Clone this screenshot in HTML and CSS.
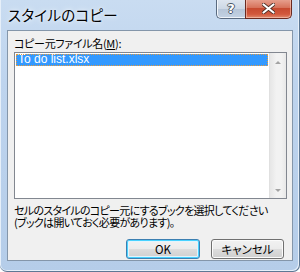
FILE: index.html
```html
<!DOCTYPE html>
<html lang="ja">
<head>
    <meta charset="UTF-8">
    <title>スタイルのコピー</title>
    <link rel="stylesheet" href="styles.css">
</head>
<body>
    <div class="window">
        <!-- Title bar -->
        <div class="titlebar">
            <span class="title">スタイルのコピー</span>
            <div class="caption-buttons">
                <div class="cap-btn help">?</div>
                <div class="cap-btn close">
                    <svg width="13" height="11" viewBox="0 0 13 11">
                        <path d="M1.5 1.5 L11.5 9.5 M11.5 1.5 L1.5 9.5" stroke="#4a2a22" stroke-width="3.6" stroke-linecap="round"/>
                        <path d="M1.5 1.5 L11.5 9.5 M11.5 1.5 L1.5 9.5" stroke="#ffffff" stroke-width="2.2" stroke-linecap="round"/>
                    </svg>
                </div>
            </div>
        </div>

        <!-- Client area -->
        <div class="client">
            <div class="label">コピー元ファイル名(<u>M</u>):</div>
            <div class="listbox">
                <div class="items">
                    <div class="item selected">To do list.xlsx</div>
                </div>
                <div class="scrollbar">
                    <div class="arrow up"></div>
                    <div class="track"></div>
                    <div class="arrow down"></div>
                </div>
            </div>
            <div class="note">
                <div class="note-line">セルのスタイルのコピー元にするブックを選択してください</div>
                <div class="note-line">(ブックは開いておく必要があります)。</div>
            </div>
            <div class="buttons">
                <div class="btn default">OK</div>
                <div class="btn">キャンセル</div>
            </div>
        </div>
    </div>
</body>
</html>
```

FILE: styles.css
```css
/* General */
html, body {
    margin: 0;
    padding: 0;
}

body {
    width: 300px;
    height: 272px;
    overflow: hidden;
    background: #ffffff;
    font-family: "Noto Sans CJK JP", "Liberation Sans", sans-serif;
    font-size: 12px;
    color: #000;
}

/* Window frame */
.window {
    box-sizing: border-box;
    width: 300px;
    height: 272px;
    display: flex;
    flex-direction: column;
    background: linear-gradient(to bottom, #c9dcf1 0%, #bed4ee 30%, #b5cde9 100%);
    border: 1px solid #5d7894;
    border-top: none;
    border-left: none;
    border-radius: 0 0 7px 7px;
    box-shadow: inset 1px 0 0 #e6eff9, inset -1px -1px 0 #e6eff9;
}

.titlebar {
    height: 30px;
    display: flex;
    justify-content: space-between;
    align-items: flex-start;
}

.title {
    font-size: 14.5px;
    line-height: 15px;
    margin: 7px 0 0 8px;
    font-feature-settings: "palt";
    letter-spacing: 0.3px;
    text-shadow: 0 0 6px #eef5fc, 0 0 3px #eef5fc;
}

.caption-buttons {
    display: flex;
    margin-right: 7px;
    margin-top: -1px;
}

.cap-btn {
    box-sizing: border-box;
    height: 20px;
    display: flex;
    align-items: center;
    justify-content: center;
    border: 1px solid #5a6b80;
    border-top: none;
}

.help {
    width: 29px;
    border-right: none;
    border-radius: 0 0 0 5px;
    background: linear-gradient(to bottom, #dfe7f0 0%, #cdd8e5 50%, #b6c5d7 51%, #c3d2e3 100%);
    box-shadow: inset 1px 0 0 #f3f7fb, inset 0 -1px 0 #eef3f9;
    font-family: "DejaVu Sans", sans-serif;
    font-weight: bold;
    font-size: 13px;
    line-height: 13px;
    color: #ffffff;
    text-shadow: 1px 0 0 #4b5866, -1px 0 0 #4b5866, 0 1px 0 #4b5866, 0 -1px 0 #4b5866;
}

.close {
    width: 47px;
    border-color: #6b2a20;
    border-radius: 0 0 5px 0;
    background: linear-gradient(to bottom, #e8a493 0%, #d7735c 45%, #c74a30 50%, #d2583c 80%, #e08a6e 100%);
    box-shadow: inset 0 0 0 1px rgba(255, 220, 205, 0.5);
}

/* Client area */
.client {
    flex: 1;
    margin: 0 6px 10px 7px;
    background: #f0f0f0;
    border: 1px solid #8496aa;
    padding: 5px 6px 0 6px;
    display: flex;
    flex-direction: column;
}

.label {
    font-size: 11px;
    line-height: 14px;
    height: 15px;
    font-feature-settings: "palt";
    letter-spacing: -0.3px;
}

.label u {
    text-decoration-thickness: 1px;
    text-underline-offset: 1px;
}

/* List box */
.listbox {
    box-sizing: border-box;
    width: 273px;
    height: 147px;
    margin-top: 1px;
    border: 1px solid #828790;
    background: #ffffff;
    display: flex;
}

.items {
    flex: 1;
    padding: 1px;
}

.item {
    font-family: "Liberation Sans", sans-serif;
    font-size: 12px;
    line-height: 11px;
    height: 12px;
    padding-left: 2px;
}

.item.selected {
    box-sizing: border-box;
    width: 252px;
    background: #3399ff;
    color: #ffffff;
    outline: 1px dotted #e59b40;
    outline-offset: -1px;
}

.scrollbar {
    width: 17px;
    display: flex;
    flex-direction: column;
    background: linear-gradient(to right, #e6e6e6, #f2f2f2 40%, #f2f2f2 70%, #e8e8e8);
    border-left: 1px solid #e0e0e0;
}

.arrow {
    height: 17px;
    position: relative;
}

.arrow::after {
    content: "";
    position: absolute;
    left: 5px;
    border-left: 3px solid transparent;
    border-right: 3px solid transparent;
}

.arrow.up::after {
    top: 8px;
    border-bottom: 3px solid #a3a3a3;
}

.arrow.down::after {
    bottom: 6px;
    border-top: 3px solid #a3a3a3;
}

.track {
    flex: 1;
}

/* Note text */
.note {
    margin-top: 5px;
    font-size: 11px;
    white-space: nowrap;
    font-feature-settings: "palt";
    letter-spacing: -0.7px;
}

.note-line {
    height: 12px;
    line-height: 12px;
    overflow: visible;
}

/* Buttons */
.buttons {
    display: flex;
    justify-content: flex-end;
    gap: 11px;
    margin-top: 11px;
    padding-right: 2px;
}

.btn {
    box-sizing: border-box;
    width: 73px;
    height: 20px;
    border: 1px solid #707070;
    border-radius: 3px;
    background: linear-gradient(to bottom, #f2f2f2 0%, #ebebeb 50%, #dddddd 51%, #cfcfcf 100%);
    box-shadow: inset 0 0 0 1px #fbfbfb;
    display: flex;
    align-items: center;
    justify-content: center;
    font-size: 11.5px;
    font-feature-settings: "palt";
}

.btn.default {
    width: 74px;
    border-color: #3c7fb1;
    box-shadow: inset 0 0 0 1px #48d2ff, inset 0 0 0 2px #e3f4fc;
}
```
